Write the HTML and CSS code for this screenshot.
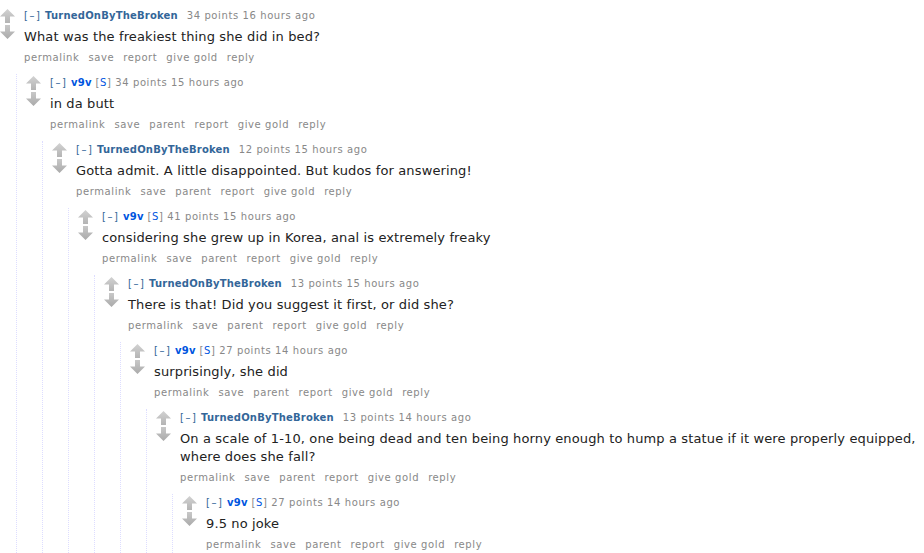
FILE: index.html
```html
<!DOCTYPE html>
<html>
<head>
<meta charset="utf-8">
<link rel="stylesheet" href="styles.css">
</head>
<body>
<svg width="0" height="0" class="defs">
  <defs>
    <linearGradient id="gu" x1="0" y1="0" x2="0" y2="1">
      <stop offset="0" stop-color="#d2d2d2"/>
      <stop offset="1" stop-color="#b4b4b4"/>
    </linearGradient>
    <linearGradient id="gd" x1="0" y1="0" x2="0" y2="1">
      <stop offset="0" stop-color="#c8c8c8"/>
      <stop offset="1" stop-color="#aaaaaa"/>
    </linearGradient>
    <symbol id="up" viewBox="0 0 15 14"><polygon points="7.5,0 15,7.5 10,7.5 10,14 5,14 5,7.5 0,7.5" fill="url(#gu)"/></symbol>
    <symbol id="down" viewBox="0 0 15 14"><polygon points="5,0 10,0 10,6.5 15,6.5 7.5,14 0,6.5 5,6.5" fill="url(#gd)"/></symbol>
  </defs>
</svg>
<div class="thread">
  <div class="comment">
    <div class="row">
      <div class="midcol"><svg class="arrow"><use href="#up"/></svg><svg class="arrow"><use href="#down"/></svg></div>
      <div class="entry">
        <p class="tagline"><a class="expand">[–]</a> <a class="author">TurnedOnByTheBroken</a><span class="attrs"></span> <span class="score">34 points</span> 16 hours ago</p>
        <p class="body">What was the freakiest thing she did in bed?</p>
        <ul class="flat-list"><li>permalink</li><li>save</li><li>report</li><li>give gold</li><li>reply</li></ul>
      </div>
    </div>
    <div class="children">
      <div class="comment">
        <div class="row">
          <div class="midcol"><svg class="arrow"><use href="#up"/></svg><svg class="arrow"><use href="#down"/></svg></div>
          <div class="entry">
            <p class="tagline"><a class="expand">[–]</a> <a class="author op">v9v</a> <span class="sub">[<a>S</a>]</span> <span class="score">34 points</span> 15 hours ago</p>
            <p class="body">in da butt</p>
            <ul class="flat-list"><li>permalink</li><li>save</li><li>parent</li><li>report</li><li>give gold</li><li>reply</li></ul>
          </div>
        </div>
        <div class="children">
          <div class="comment">
            <div class="row">
              <div class="midcol"><svg class="arrow"><use href="#up"/></svg><svg class="arrow"><use href="#down"/></svg></div>
              <div class="entry">
                <p class="tagline"><a class="expand">[–]</a> <a class="author">TurnedOnByTheBroken</a><span class="attrs"></span> <span class="score">12 points</span> 15 hours ago</p>
                <p class="body">Gotta admit. A little disappointed. But kudos for answering!</p>
                <ul class="flat-list"><li>permalink</li><li>save</li><li>parent</li><li>report</li><li>give gold</li><li>reply</li></ul>
              </div>
            </div>
            <div class="children">
              <div class="comment">
                <div class="row">
                  <div class="midcol"><svg class="arrow"><use href="#up"/></svg><svg class="arrow"><use href="#down"/></svg></div>
                  <div class="entry">
                    <p class="tagline"><a class="expand">[–]</a> <a class="author op">v9v</a> <span class="sub">[<a>S</a>]</span> <span class="score">41 points</span> 15 hours ago</p>
                    <p class="body">considering she grew up in Korea, anal is extremely freaky</p>
                    <ul class="flat-list"><li>permalink</li><li>save</li><li>parent</li><li>report</li><li>give gold</li><li>reply</li></ul>
                  </div>
                </div>
                <div class="children">
                  <div class="comment">
                    <div class="row">
                      <div class="midcol"><svg class="arrow"><use href="#up"/></svg><svg class="arrow"><use href="#down"/></svg></div>
                      <div class="entry">
                        <p class="tagline"><a class="expand">[–]</a> <a class="author">TurnedOnByTheBroken</a><span class="attrs"></span> <span class="score">13 points</span> 15 hours ago</p>
                        <p class="body">There is that! Did you suggest it first, or did she?</p>
                        <ul class="flat-list"><li>permalink</li><li>save</li><li>parent</li><li>report</li><li>give gold</li><li>reply</li></ul>
                      </div>
                    </div>
                    <div class="children">
                      <div class="comment">
                        <div class="row">
                          <div class="midcol"><svg class="arrow"><use href="#up"/></svg><svg class="arrow"><use href="#down"/></svg></div>
                          <div class="entry">
                            <p class="tagline"><a class="expand">[–]</a> <a class="author op">v9v</a> <span class="sub">[<a>S</a>]</span> <span class="score">27 points</span> 14 hours ago</p>
                            <p class="body">surprisingly, she did</p>
                            <ul class="flat-list"><li>permalink</li><li>save</li><li>parent</li><li>report</li><li>give gold</li><li>reply</li></ul>
                          </div>
                        </div>
                        <div class="children">
                          <div class="comment">
                            <div class="row">
                              <div class="midcol"><svg class="arrow"><use href="#up"/></svg><svg class="arrow"><use href="#down"/></svg></div>
                              <div class="entry">
                                <p class="tagline"><a class="expand">[–]</a> <a class="author">TurnedOnByTheBroken</a><span class="attrs"></span> <span class="score">13 points</span> 14 hours ago</p>
                                <p class="body">On a scale of 1-10, one being dead and ten being horny enough to hump a statue if it were properly equipped, where does she fall?</p>
                                <ul class="flat-list"><li>permalink</li><li>save</li><li>parent</li><li>report</li><li>give gold</li><li>reply</li></ul>
                              </div>
                            </div>
                            <div class="children">
                              <div class="comment">
                                <div class="row">
                                  <div class="midcol"><svg class="arrow"><use href="#up"/></svg><svg class="arrow"><use href="#down"/></svg></div>
                                  <div class="entry">
                                    <p class="tagline"><a class="expand">[–]</a> <a class="author op">v9v</a> <span class="sub">[<a>S</a>]</span> <span class="score">27 points</span> 14 hours ago</p>
                                    <p class="body">9.5 no joke</p>
                                    <ul class="flat-list"><li>permalink</li><li>save</li><li>parent</li><li>report</li><li>give gold</li><li>reply</li></ul>
                                  </div>
                                </div>
                              </div>
                            </div>
                          </div>
                        </div>
                      </div>
                    </div>
                  </div>
                </div>
              </div>
            </div>
          </div>
        </div>
      </div>
    </div>
  </div>
</div>
</body>
</html>
```
FILE: styles.css
```css
html, body {
  margin: 0;
  padding: 0;
  background: #fff;
}
body {
  font-family: "DejaVu Sans", Verdana, sans-serif;
  color: #222;
  overflow: hidden;
}
.defs {
  position: absolute;
  width: 0;
  height: 0;
}
.thread {
  padding-top: 7px;
}
.row {
  display: flex;
  align-items: flex-start;
}
.midcol {
  width: 15px;
  margin-right: 9px;
  padding-top: 2px;
  display: flex;
  flex-direction: column;
  gap: 2px;
  flex-shrink: 0;
}
.arrow {
  display: block;
  width: 15px;
  height: 14px;
}
.entry {
  flex: 1;
  min-width: 0;
}
.tagline {
  margin: 2px 0 0;
  font-size: 10px;
  line-height: 14px;
  color: #888;
  white-space: nowrap;
  letter-spacing: 0.6px;
}
.expand {
  color: #369;
  letter-spacing: 1.5px;
}
.author {
  color: #369;
  font-weight: bold;
  letter-spacing: 0.2px;
}
.author.op {
  color: #0055df;
}
.attrs {
  display: inline-block;
  width: 5px;
}
.sub {
  color: #888;
}
.sub a {
  color: #0055df;
}
.body {
  margin: 5px 0 0;
  font-size: 13px;
  line-height: 18px;
  color: #222;
  letter-spacing: 0.13px;
}
.flat-list {
  list-style: none;
  margin: 5px 0 0;
  padding: 0 0 9px;
  display: flex;
  gap: 9px;
  font-size: 10px;
  line-height: 14px;
  color: #888;
  letter-spacing: 0.6px;
}
.children {
  margin-left: 16px;
  border-left: 1px dotted #ddf;
  padding-left: 9px;
}
```
